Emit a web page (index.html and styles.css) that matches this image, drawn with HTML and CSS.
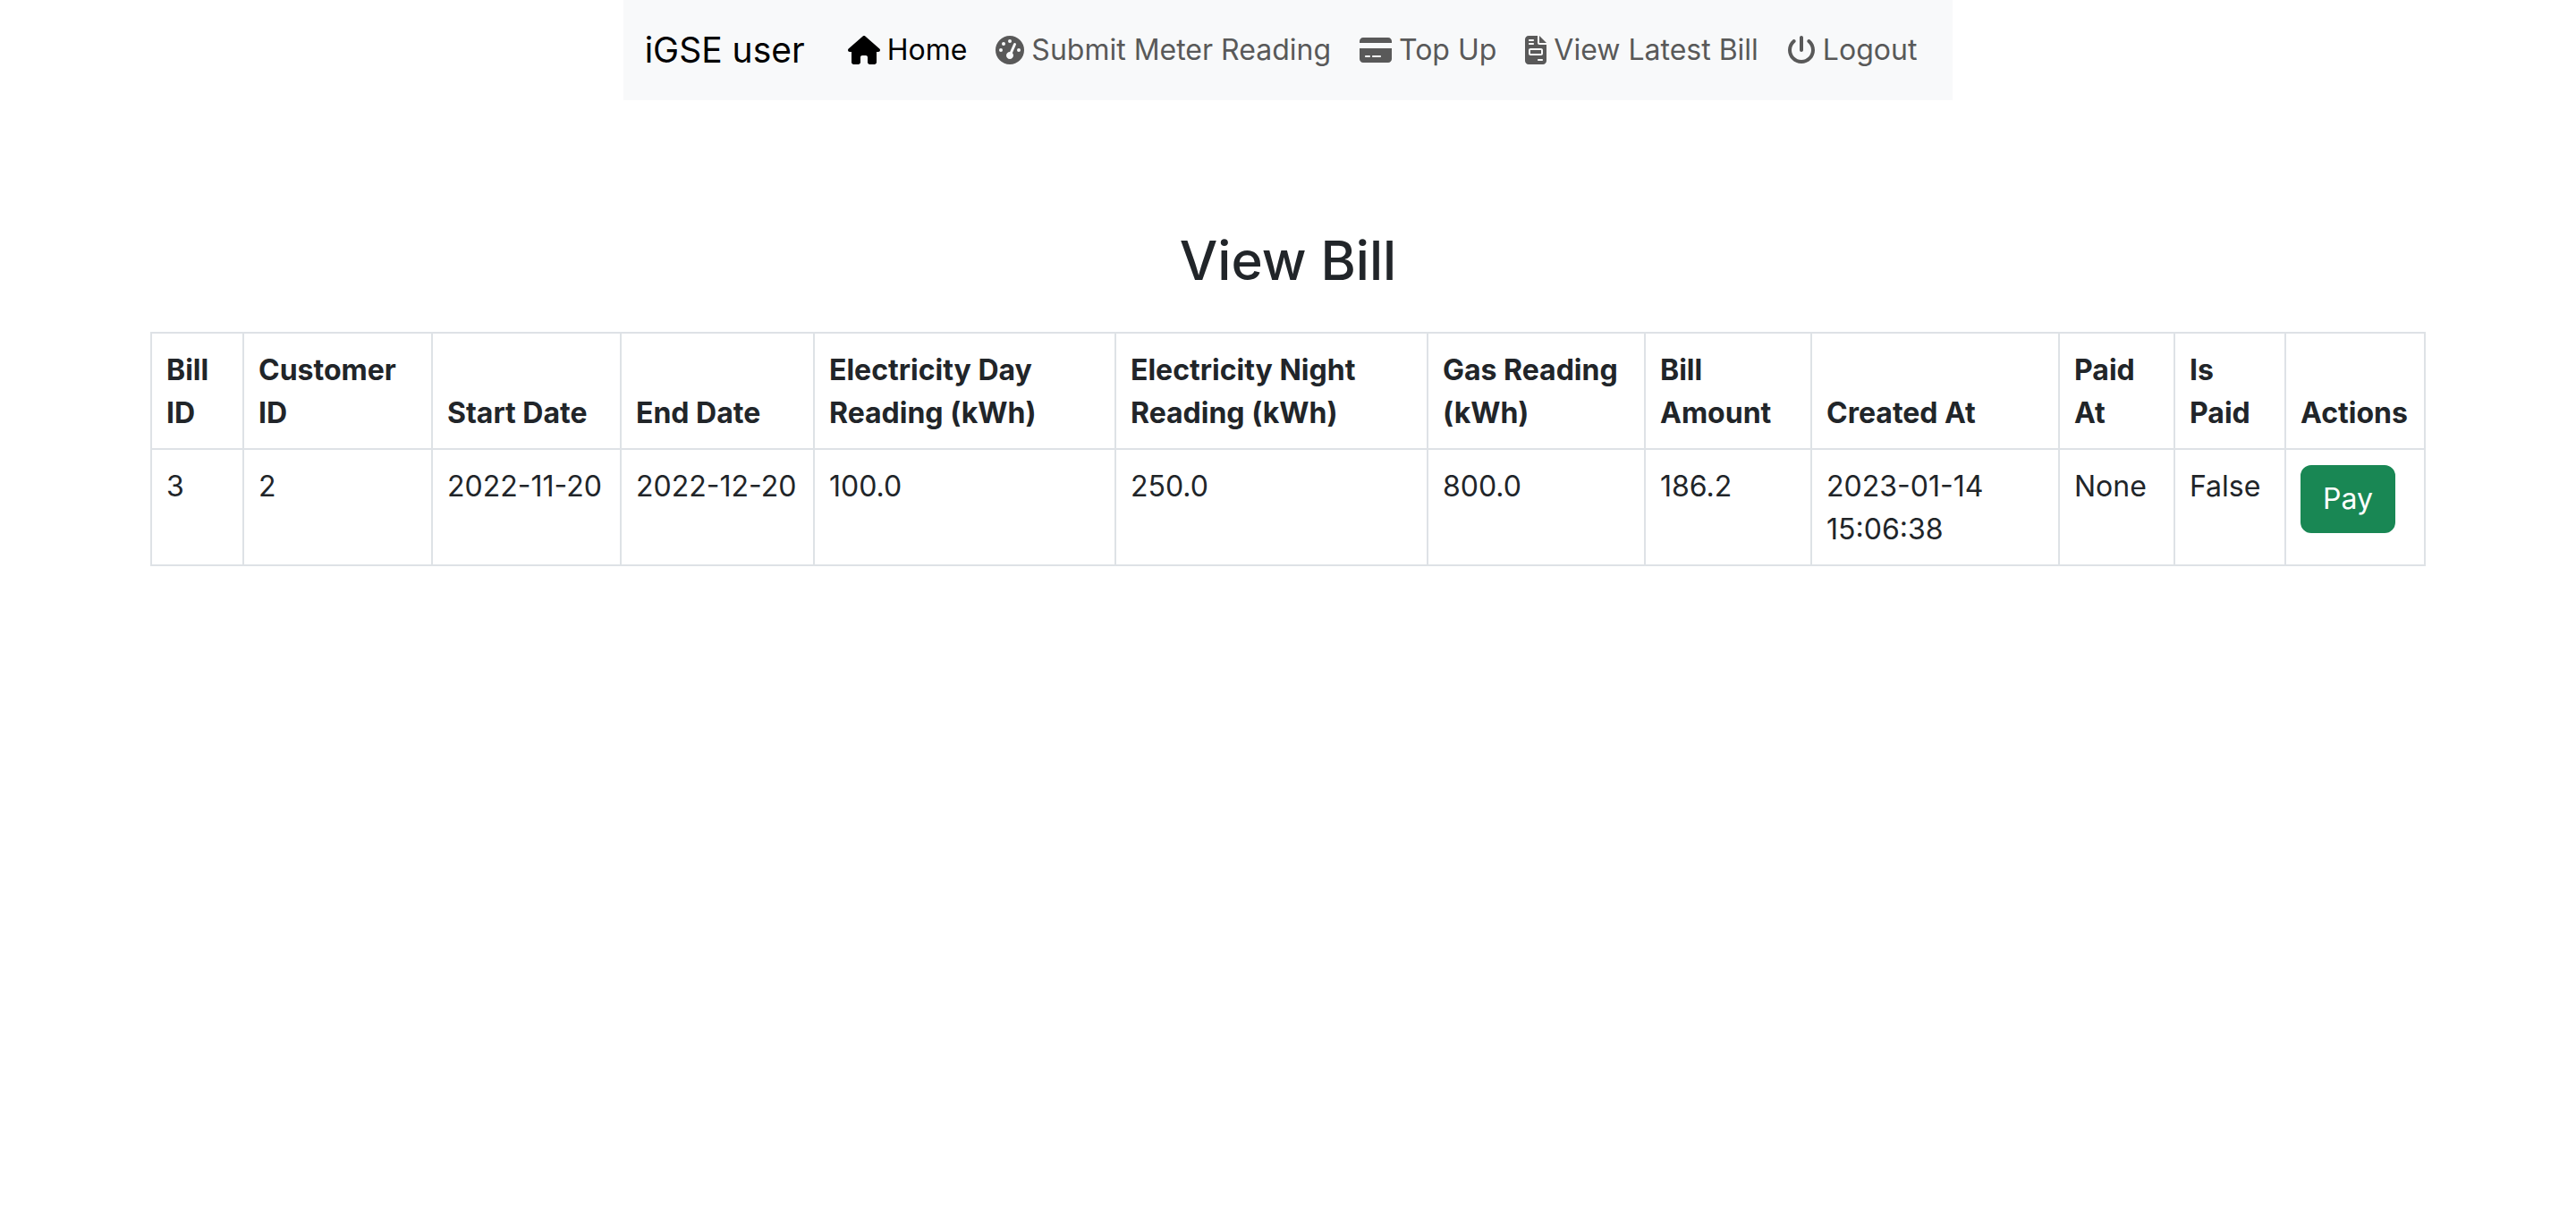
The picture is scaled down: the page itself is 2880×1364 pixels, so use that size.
FILE: index.html
```html
<!DOCTYPE html>
<html lang="en">
<head>
  <meta charset="utf-8">
  <title>iGSE user - View Bill</title>
  <link rel="stylesheet" href="styles.css">
</head>
<body>
  <header class="page-header">
    <nav class="navbar" aria-label="Main">
      <a class="navbar-brand" href="#">iGSE user</a>
      <ul class="nav-list">
        <li><a class="nav-link active" href="#" aria-current="page"><svg class="icon icon-wide" viewBox="0 0 576 512" aria-hidden="true"><path d="M575.8 255.5c0 18-15 32.1-32 32.1h-32l.7 160.2c0 2.7-.2 5.4-.5 8.100V472c0 22.100-17.900 40-40 40H456c-1.100 0-2.200 0-3.300-.1c-1.400 .1-2.800 .1-4.200 .1H416 392c-22.100 0-40-17.900-40-40V448 384c0-17.700-14.300-32-32-32H256c-17.700 0-32 14.300-32 32v64 24c0 22.100-17.900 40-40 40H160 128.100c-1.500 0-3-.1-4.500-.2c-1.200 .1-2.400 .2-3.600 .2H104c-22.100 0-40-17.900-40-40V360c0-.9 0-1.900 .1-2.800V287.600H32c-18 0-32-14-32-32.100c0-9 3-17 10-24L266.400 8c7-7 15-8 22-8s15 2 21 7L564.800 231.500c8 7 12 15 11 24z"/></svg>Home</a></li>
        <li><a class="nav-link" href="#"><svg class="icon" viewBox="0 0 512 512" aria-hidden="true"><path fill-rule="evenodd" d="M0 256a256 256 0 1 1 512 0A256 256 0 1 1 0 256zM288 96a32 32 0 1 0-64 0 32 32 0 1 0 64 0zM256 416c35.300 0 64-28.700 64-64c0-17.400-6.900-33.100-18.100-44.600L366 161.700c5.300-12.100-.2-26.300-12.300-31.600s-26.300 .2-31.600 12.300L257.900 288c-.6 0-1.300 0-1.900 0c-35.300 0-64 28.700-64 64s28.700 64 64 64zM176 144a32 32 0 1 0-64 0 32 32 0 1 0 64 0zM96 288a32 32 0 1 0 0-64 32 32 0 1 0 0 64zm352-32a32 32 0 1 0-64 0 32 32 0 1 0 64 0z"/></svg>Submit Meter Reading</a></li>
        <li><a class="nav-link" href="#"><svg class="icon icon-wide" viewBox="0 0 576 512" aria-hidden="true"><path fill-rule="evenodd" d="M512 32H64C28.700 32 0 60.700 0 96v32H576V96c0-35.300-28.700-64-64-64zM576 224H0V416c0 35.300 28.700 64 64 64H512c35.300 0 64-28.700 64-64V224zM112 352h64c8.800 0 16 7.200 16 16s-7.200 16-16 16H112c-8.800 0-16-7.200-16-16s7.200-16 16-16zm112 16c0-8.800 7.200-16 16-16H368c8.800 0 16 7.200 16 16s-7.200 16-16 16H240c-8.800 0-16-7.200-16-16z"/></svg>Top Up</a></li>
        <li><a class="nav-link" href="#"><svg class="icon icon-narrow" viewBox="0 0 384 512" aria-hidden="true"><path fill-rule="evenodd" d="M64 0C28.700 0 0 28.700 0 64V448c0 35.300 28.700 64 64 64H320c35.300 0 64-28.700 64-64V160H256c-17.700 0-32-14.300-32-32V0H64zM256 0V128H384L256 0zM80 64h64c8.800 0 16 7.200 16 16s-7.200 16-16 16H80c-8.800 0-16-7.200-16-16s7.200-16 16-16zm0 64h64c8.800 0 16 7.200 16 16s-7.200 16-16 16H80c-8.800 0-16-7.200-16-16s7.200-16 16-16zm16 96H288c17.700 0 32 14.300 32 32v64c0 17.700-14.300 32-32 32H96c-17.700 0-32-14.300-32-32V256c0-17.700 14.300-32 32-32zm0 32v64H288V256H96zM240 416h64c8.800 0 16 7.200 16 16s-7.200 16-16 16H240c-8.800 0-16-7.200-16-16s7.200-16 16-16z"/></svg>View Latest Bill</a></li>
        <li><a class="nav-link" href="#"><svg class="icon" viewBox="0 0 512 512" aria-hidden="true"><path d="M288 32c0-17.700-14.300-32-32-32s-32 14.300-32 32V256c0 17.700 14.300 32 32 32s32-14.300 32-32V32zM143.500 120.600c13.600-11.300 15.400-31.500 4.100-45.100s-31.500-15.400-45.100-4.100C49.700 115.400 16 181.800 16 256c0 132.500 107.500 240 240 240s240-107.500 240-240c0-74.200-33.800-140.600-86.600-184.600c-13.600-11.300-33.800-9.400-45.100 4.100s-9.400 33.800 4.100 45.100c38.900 32.300 63.500 81 63.500 135.400c0 97.200-78.800 176-176 176s-176-78.800-176-176c0-54.400 24.700-103.100 63.500-135.400z"/></svg>Logout</a></li>
      </ul>
    </nav>
  </header>
  <main class="container">
    <h2 class="page-title">View Bill</h2>
    <table class="bill-table">
      <colgroup>
        <col class="col-bill-id"><col class="col-date"><col class="col-date"><col class="col-end-date">
        <col class="col-day"><col class="col-night"><col class="col-gas"><col class="col-amount">
        <col class="col-created"><col class="col-paid-at"><col class="col-is-paid"><col class="col-actions">
      </colgroup>
      <thead>
        <tr>
          <th scope="col">Bill ID</th>
          <th scope="col">Customer ID</th>
          <th scope="col">Start Date</th>
          <th scope="col">End Date</th>
          <th scope="col">Electricity Day Reading (kWh)</th>
          <th scope="col">Electricity Night Reading (kWh)</th>
          <th scope="col">Gas Reading (kWh)</th>
          <th scope="col">Bill Amount</th>
          <th scope="col">Created At</th>
          <th scope="col">Paid At</th>
          <th scope="col">Is Paid</th>
          <th scope="col">Actions</th>
        </tr>
      </thead>
      <tbody>
        <tr>
          <td>3</td>
          <td>2</td>
          <td class="date">2022-11-20</td>
          <td class="date">2022-12-20</td>
          <td>100.0</td>
          <td>250.0</td>
          <td>800.0</td>
          <td>186.2</td>
          <td>2023-01-14 15:06:38</td>
          <td>None</td>
          <td>False</td>
          <td><button class="btn-pay" type="button">Pay</button></td>
        </tr>
      </tbody>
    </table>
  </main>
</body>
</html>
```
FILE: styles.css
```css
*, *::before, *::after { box-sizing: border-box; }

body {
  margin: 0;
  background: #fff;
  color: #212529;
  font-family: Inter, "Liberation Sans", sans-serif;
  font-size: 32px;
  line-height: 48px;
}

.page-header {
  display: flex;
  justify-content: center;
}

.navbar {
  display: flex;
  align-items: center;
  gap: 32px;
  padding: 16px 24px;
  background: #f8f9fa;
}

.navbar-brand {
  color: #000;
  font-size: 39px;
  line-height: 60px;
  text-decoration: none;
  white-space: nowrap;
}

.nav-list {
  display: flex;
  margin: 0;
  padding: 0;
  list-style: none;
}

.nav-link {
  display: flex;
  align-items: center;
  gap: 8px;
  padding: 16px;
  color: #595959;
  text-decoration: none;
  white-space: nowrap;
}

.nav-link.active { color: #000; }

.icon {
  flex: none;
  width: 32px;
  height: 32px;
  fill: currentColor;
}

.icon-wide { width: 36px; }
.icon-narrow { width: 24px; }

.container {
  max-width: 2640px;
  margin: 0 auto;
  padding: 140px 48px 0;
}

.page-title {
  margin: 0 0 40px;
  font-size: 60px;
  font-weight: 500;
  line-height: 79px;
  text-align: center;
}

.bill-table {
  width: 100%;
  table-layout: fixed;
  border-collapse: collapse;
  text-align: left;
}

.bill-table th,
.bill-table td {
  padding: 17px 16px 15px;
  border: 2px solid #dee2e6;
  vertical-align: top;
}

.bill-table th {
  font-weight: 700;
  vertical-align: bottom;
}

.date { white-space: nowrap; }

.col-bill-id { width: 103px; }
.col-date { width: 211px; }
.col-end-date { width: 216px; }
.col-day { width: 337px; }
.col-night { width: 349px; }
.col-gas { width: 243px; }
.col-amount { width: 186px; }
.col-created { width: 277px; }
.col-paid-at { width: 129px; }
.col-is-paid { width: 124px; }
.col-actions { width: 156px; }

.btn-pay {
  display: block;
  padding: 12px 23px;
  border: 2px solid #198754;
  border-radius: 12px;
  background: #198754;
  color: #fff;
  font: inherit;
}
```
